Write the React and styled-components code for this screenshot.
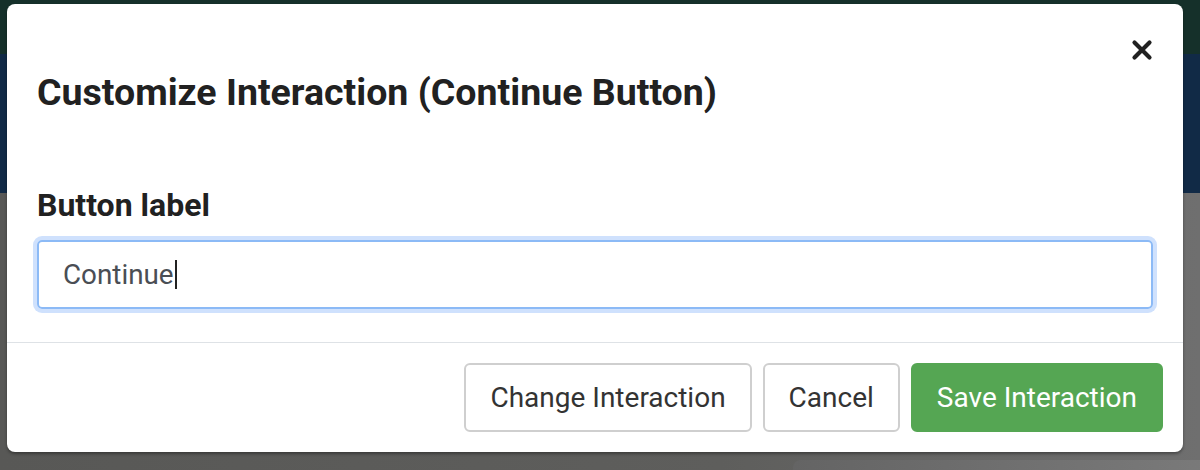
import styled, { createGlobalStyle } from "styled-components";

const GlobalStyle = createGlobalStyle`
	html, body {
		margin: 0;
		padding: 0;
		background: #5a5a58;
	}
	* {
		box-sizing: border-box;
	}
`;

const Page = styled.div`
	position: relative;
	width: 1200px;
	height: 470px;
	overflow: hidden;
	font-family: Roboto, "Liberation Sans", sans-serif;
	background:
		linear-gradient(to bottom, #15302a 0 54px, #112a46 54px 193px, transparent 193px),
		linear-gradient(to right, #585856 0%, #5e5e5c 60%, #6f6f6f 100%);
`;

const BackPanel = styled.div`
	position: absolute;
	left: 793px;
	top: 460px;
	width: 420px;
	height: 40px;
	border-radius: 8px;
	background: linear-gradient(to right, #646464, #7a7a7a);
`;

const Overlay = styled.div`
	position: absolute;
	inset: 0;
	padding: 4px 17px 0 7px;
`;

const Dialog = styled.div`
	display: flex;
	flex-direction: column;
	width: 1176px;
	height: 448px;
	background: #fff;
	border-radius: 8px;
	box-shadow: 0 2px 3px rgba(0, 0, 0, 0.35);
`;

const Header = styled.div`
	display: flex;
	flex-direction: column;
	padding: 35px 30px 0 30px;
`;

const CloseRow = styled.div`
	display: flex;
	justify-content: flex-end;
`;

const CloseButton = styled.button`
	width: 22px;
	height: 22px;
	padding: 0;
	border: 0;
	background: transparent;
	display: flex;
	color: #212121;
`;

const Title = styled.h2`
	margin: 9px 0 0;
	font-size: 37.5px;
	line-height: 44px;
	font-weight: 700;
	color: #212121;
`;

const Body = styled.div`
	display: flex;
	flex-direction: column;
	padding: 0 30px;
	margin-top: 72px;
`;

const Label = styled.label`
	font-size: 32px;
	line-height: 38px;
	font-weight: 700;
	color: #212121;
`;

const TextInput = styled.div`
	margin-top: 16px;
	height: 69px;
	display: flex;
	align-items: center;
	padding: 0 24px;
	border: 2px solid #8cbaf6;
	border-radius: 5px;
	box-shadow: 0 0 0 4px #cfe1fd;
	font-size: 27.8px;
	color: #4a4e54;
`;

const Caret = styled.span`
	display: inline-block;
	width: 2px;
	height: 29px;
	margin-left: 1px;
	background: #222;
`;

const Footer = styled.div`
	margin-top: auto;
	display: flex;
	justify-content: flex-end;
	gap: 11px;
	padding: 20px 20px 20px;
	border-top: 1px solid #dee2e6;
`;

const Button = styled.button`
	height: 69px;
	padding: 0 24px;
	border-radius: 6px;
	font-family: Roboto, "Liberation Sans", sans-serif;
	font-size: 28px;
	border: 2px solid ${(p) => (p.$primary ? "#55a653" : "#cfcfcf")};
	background: ${(p) => (p.$primary ? "#55a653" : "#fff")};
	color: ${(p) => (p.$primary ? "#fff" : "#333")};
`;

export default function App() {
	return (
		<Page>
			<GlobalStyle />
			<BackPanel />
			<Overlay>
				<Dialog>
					<Header>
						<CloseRow>
							<CloseButton aria-label='Close'>
								<svg width='22' height='22' viewBox='0 0 22 22'>
									<path
										d='M3.5 3.5 L18.5 18.5 M18.5 3.5 L3.5 18.5'
										stroke='currentColor'
										strokeWidth='4.2'
										strokeLinecap='round'
									/>
								</svg>
							</CloseButton>
						</CloseRow>
						<Title>Customize Interaction (Continue Button)</Title>
					</Header>
					<Body>
						<Label>Button label</Label>
						<TextInput>
							Continue
							<Caret />
						</TextInput>
					</Body>
					<Footer>
						<Button>Change Interaction</Button>
						<Button>Cancel</Button>
						<Button $primary>Save Interaction</Button>
					</Footer>
				</Dialog>
			</Overlay>
		</Page>
	);
}
